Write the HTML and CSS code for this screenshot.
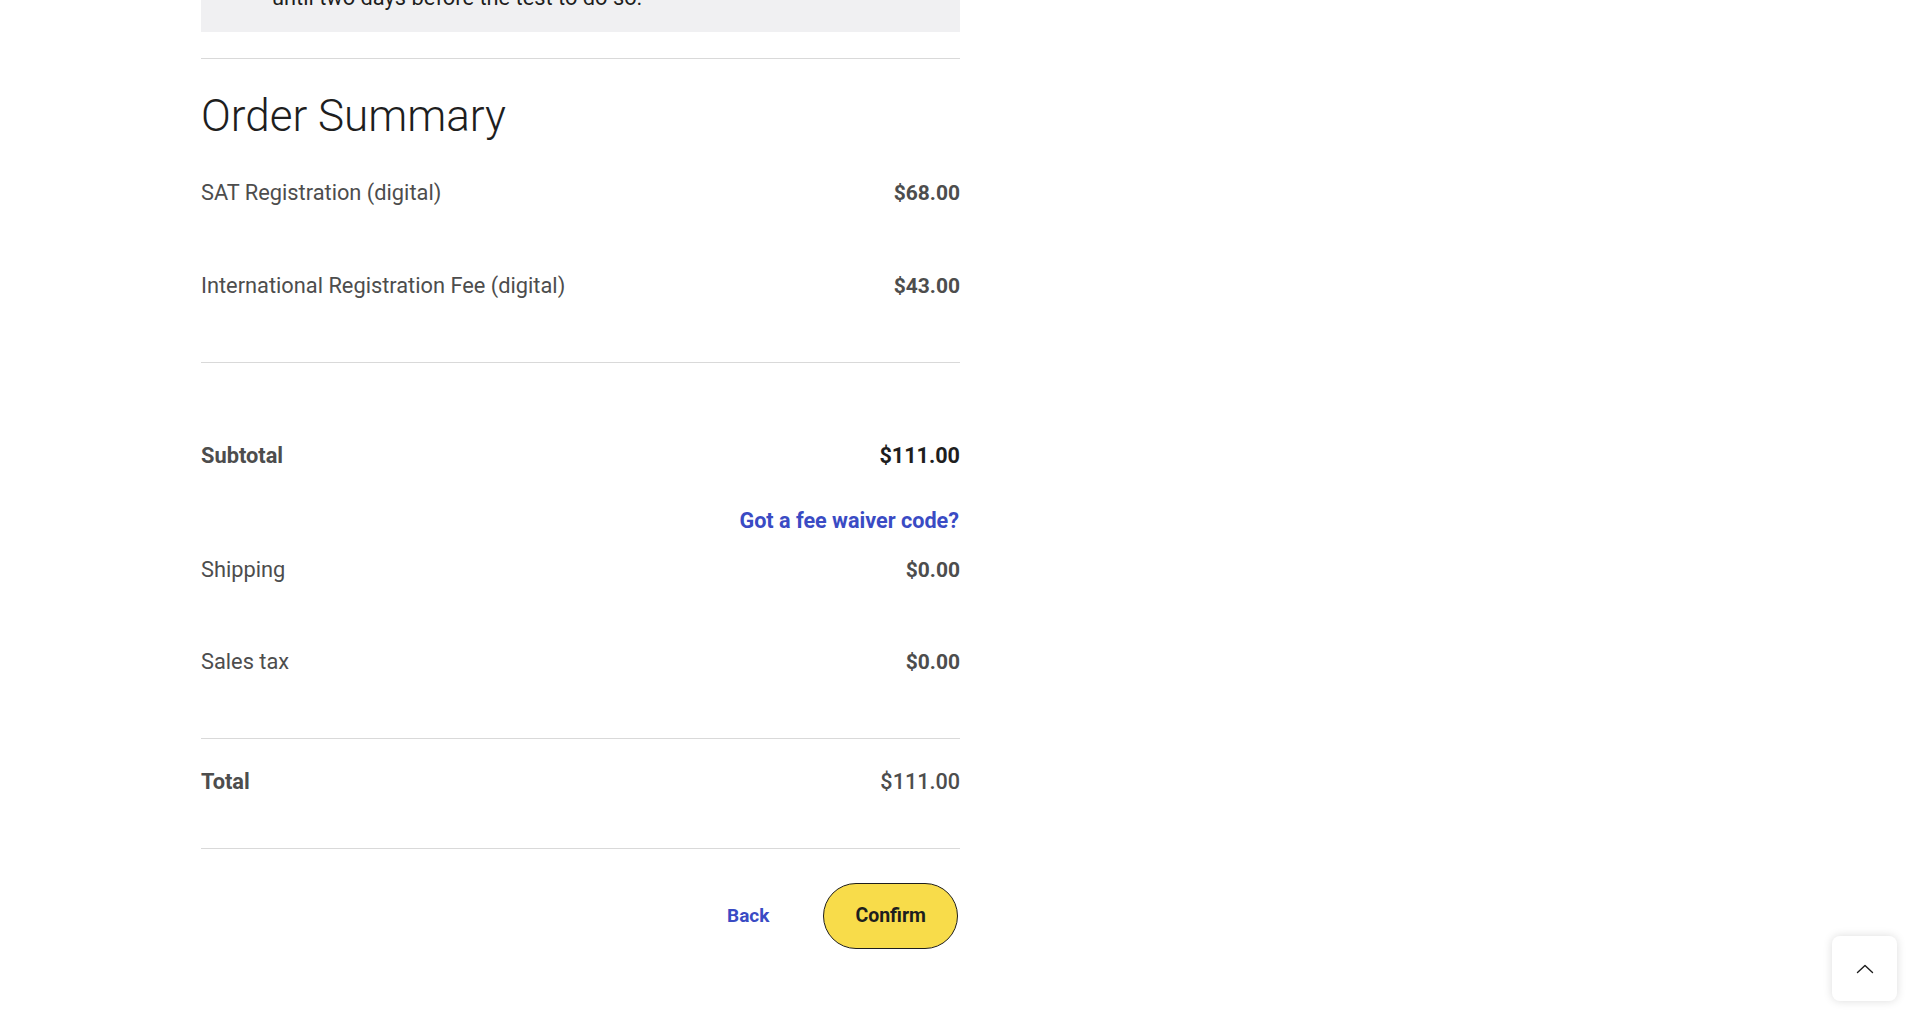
FILE: index.html
```html
<!DOCTYPE html>
<html lang="en">
<head>
<meta charset="utf-8">
<title>Order Summary</title>
<link rel="stylesheet" href="styles.css">
</head>
<body>
<main class="page">
  <section class="notice">
    <ul class="notice-list">
      <li>You can change your test center or test date online, up</li>
      <li>until two days before the test to do so.</li>
    </ul>
  </section>

  <hr class="divider divider-top">

  <h1 class="title">Order Summary</h1>

  <section class="items">
    <div class="row">
      <span class="label">SAT Registration (digital)</span>
      <span class="amount">$68.00</span>
    </div>
    <div class="row">
      <span class="label">International Registration Fee (digital)</span>
      <span class="amount">$43.00</span>
    </div>
  </section>

  <hr class="divider">

  <section class="totals">
    <div class="row">
      <span class="label strong">Subtotal</span>
      <span class="amount dark">$111.00</span>
    </div>
    <div class="waiver">
      <a class="link" href="#">Got a fee waiver code?</a>
    </div>
    <div class="row row-shipping">
      <span class="label">Shipping</span>
      <span class="amount">$0.00</span>
    </div>
    <div class="row row-tax">
      <span class="label">Sales tax</span>
      <span class="amount">$0.00</span>
    </div>
  </section>

  <hr class="divider">

  <section class="grand">
    <div class="row">
      <span class="label strong">Total</span>
      <span class="amount medium">$111.00</span>
    </div>
  </section>

  <hr class="divider">

  <div class="actions">
    <button class="btn-back" type="button">Back</button>
    <button class="btn-confirm" type="button">Confirm</button>
  </div>
</main>

<button class="to-top" type="button" aria-label="Back to top">
  <svg width="18" height="10" viewBox="0 0 18 10" fill="none">
    <path d="M1.5 8.5 L9 1.5 L16.5 8.5" stroke="#1e1e1e" stroke-width="1.4" stroke-linecap="round" stroke-linejoin="round"/>
  </svg>
</button>
</body>
</html>
```

FILE: styles.css
```css
* {
  box-sizing: border-box;
}

html, body {
  margin: 0;
  padding: 0;
  background: #ffffff;
}

body {
  font-family: Roboto, "Liberation Sans", Arial, sans-serif;
  color: #4d4d4d;
  overflow: hidden;
  height: 1021px;
}

.page {
  width: 759px;
  margin: -47px 0 0 201px;
}

.notice {
  background: #f0f0f2;
  padding: 0 24px 19px 0;
}

.notice-list {
  list-style: none;
  margin: 0;
  padding: 0 0 0 71px;
  font-size: 21.8px;
  line-height: 30px;
  color: #1e1e1e;
}

.divider {
  border: 0;
  border-top: 1px solid #d9d9d9;
  margin: 0;
  height: 0;
}

.divider-top {
  margin-top: 26px;
}

.title {
  margin: 31px 0 0;
  font-size: 44px;
  line-height: 52px;
  font-weight: 300;
  color: #1e1e1e;
}

.row {
  display: flex;
  justify-content: space-between;
  align-items: center;
  font-size: 21.8px;
  line-height: 24px;
}

.items {
  display: flex;
  flex-direction: column;
  gap: 69px;
  padding: 39px 0 64px;
}

.amount {
  font-size: 21px;
  font-weight: 700;
  color: #4d4d4d;
}

.amount.dark {
  font-size: 21.6px;
  color: #1e1e1e;
}

.amount.medium {
  font-size: 21.6px;
  font-weight: 500;
}

.label.strong {
  font-weight: 700;
}

.totals {
  padding: 81px 0 64px;
}

.waiver {
  display: flex;
  justify-content: flex-end;
  margin-top: 41px;
  padding-right: 1px;
  font-size: 21.6px;
  line-height: 24px;
}

.link {
  color: #3a4bc4;
  font-weight: 700;
  text-decoration: none;
}

.row-shipping {
  margin-top: 25px;
}

.row-tax {
  margin-top: 68px;
}

.grand {
  padding: 31px 0 54px;
}

.actions {
  display: flex;
  justify-content: flex-end;
  align-items: center;
  padding: 34px 2px 0 0;
}

.btn-back {
  background: none;
  border: 0;
  padding: 0;
  margin-right: 54px;
  font-family: inherit;
  font-size: 19px;
  font-weight: 700;
  line-height: 24px;
  color: #3a4bc4;
  cursor: pointer;
}

.btn-confirm {
  height: 66px;
  padding: 0 31px;
  border: 1px solid #1e1e1e;
  border-radius: 33px;
  background: #f8dc4a;
  font-family: inherit;
  font-size: 19.5px;
  font-weight: 700;
  line-height: 24px;
  color: #1e1e1e;
  cursor: pointer;
}

.to-top {
  position: fixed;
  right: 23px;
  bottom: 20px;
  width: 65px;
  height: 65px;
  border: 0;
  border-radius: 8px;
  background: #ffffff;
  box-shadow: 0 0 10px rgba(0, 0, 0, 0.14);
  display: flex;
  align-items: center;
  justify-content: center;
  padding: 0;
  cursor: pointer;
}
```
